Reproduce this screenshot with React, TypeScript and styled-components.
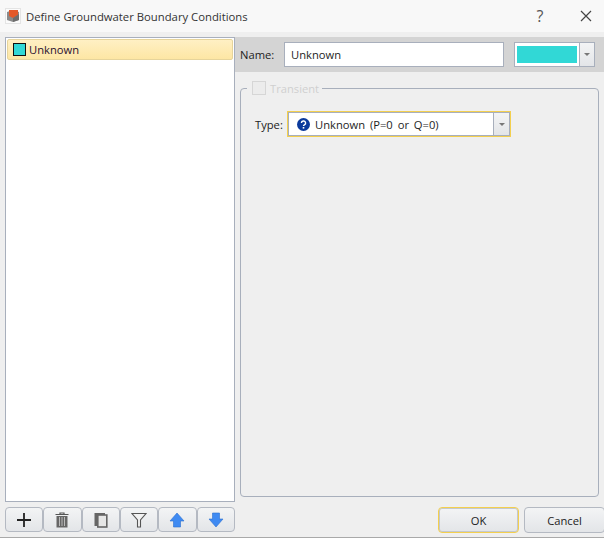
import React from 'react'
import styled, { createGlobalStyle } from 'styled-components'

const GlobalStyle = createGlobalStyle`
  html, body { margin: 0; padding: 0; background: #efefef; }
  * { box-sizing: border-box; }
`

const Dialog = styled.div`
  width: 604px;
  height: 538px;
  display: flex;
  flex-direction: column;
  overflow: hidden;
  background: #efefef;
  font-family: "Open Sans", "Liberation Sans", sans-serif;
  font-size: 11.2px;
  color: #1e1e1e;
  border-bottom: 1px solid #a9a9a9;
`

const TitleBar = styled.div`
  height: 32px;
  flex: none;
  display: flex;
  align-items: center;
  gap: 10px;
  padding-left: 5px;
  background: #f8f8f8;
`

const AppIcon = styled.div`
  width: 16px;
  height: 16px;
  margin-right: -5px;
  border: 1px solid #e4e4e4;
  background: #fbfbfb;
  display: flex;
  align-items: center;
  justify-content: center;
`

const Title = styled.span`
  flex: 1;
  font-size: 11.3px;
  color: #333;
`

const WindowButton = styled.div`
  width: 36px;
  height: 32px;
  display: flex;
  align-items: center;
  justify-content: center;
  color: #555;
  font-size: 16px;
`

const Body = styled.div`
  flex: 1;
  min-height: 0;
  display: grid;
  grid-template-columns: 235px 1fr;
`

const LeftColumn = styled.div`
  display: flex;
  flex-direction: column;
  padding: 5px 0 5px 5px;
`

const List = styled.div`
  flex: 1;
  background: #fff;
  border: 1px solid #a8afbc;
  padding: 1px;
`

const ListItem = styled.div`
  height: 21px;
  display: flex;
  align-items: center;
  gap: 3px;
  padding-left: 5px;
  border: 1px solid #e6d49b;
  border-radius: 2px;
  background: linear-gradient(#fff0c4, #fde6a4);
  color: #2a1030;
`

const Swatch = styled.span`
  width: 13px;
  height: 13px;
  background: #31d8d6;
  border: 1px solid #111;
`

const Toolbar = styled.div`
  flex: none;
  display: flex;
  margin-top: 5px;
  height: 25px;
`

const ToolButton = styled.div`
  width: 38.4px;
  display: flex;
  align-items: center;
  justify-content: center;
  border: 1px solid #b4b9c2;
  border-radius: 4px;
  background: linear-gradient(#f3f4f5, #e3e5e8);
`

const RightColumn = styled.div`
  display: flex;
  flex-direction: column;
  padding-top: 5px;
  min-width: 0;
`

const NameBar = styled.div`
  height: 35px;
  flex: none;
  display: flex;
  align-items: center;
  padding-left: 5px;
  background: #d4d4d4;
`

const Label = styled.span<{ $width: number }>`
  width: ${({ $width }) => $width}px;
  flex: none;
  color: #222;
`

const NameInput = styled.div`
  width: 220px;
  height: 25px;
  margin-left: 10px;
  padding: 0 0 1px 6px;
  display: flex;
  align-items: center;
  background: #fff;
  border: 1px solid #a8afbc;
`

const ColorCombo = styled.div`
  width: 81px;
  height: 25px;
  margin-left: 10px;
  display: flex;
  background: #fff;
  border: 1px solid #a8afbc;
`

const ColorFill = styled.div`
  flex: 1;
  margin: 3px 2px;
  background: #31d8d6;
`

const ArrowBox = styled.div<{ $width: number }>`
  width: ${({ $width }) => $width}px;
  flex: none;
  display: flex;
  align-items: center;
  justify-content: center;
  border-left: 1px solid #a8afbc;
  background: linear-gradient(#f3f4f5, #e3e5e8);
  &::after {
    content: "";
    border-left: 3.5px solid transparent;
    border-right: 3.5px solid transparent;
    border-top: 3px solid #777;
  }
`

const Group = styled.fieldset`
  flex: 1;
  min-height: 0;
  min-width: 0;
  margin: 9px 5px 10px 5px;
  padding: 0 0 0 14px;
  border: 1px solid #a8afbc;
  border-radius: 4px;
`

const GroupLegend = styled.legend`
  display: flex;
  align-items: center;
  gap: 4px;
  height: 14px;
  margin-left: -8px;
  padding: 0 3px 0 5px;
  color: #cfcfcf;
`

const CheckBox = styled.span`
  width: 14px;
  height: 14px;
  border: 1px solid #d6d6d6;
  background: #ececec;
`

const TypeRow = styled.div`
  display: flex;
  align-items: center;
  margin-top: 16px;
  gap: 4px;
`

const TypeCombo = styled.div`
  width: 224px;
  height: 26px;
  display: flex;
  padding: 1px;
  background: #fff;
  border: 1px solid #f3cf4e;
  box-shadow: inset 0 0 0 1px #a8afbc;
`

const TypeValue = styled.div`
  flex: 1;
  display: flex;
  align-items: center;
  gap: 5px;
  padding-left: 8px;
  word-spacing: 2px;
`

const Footer = styled.div`
  flex: none;
  height: 30px;
  display: flex;
  gap: 5px;
  padding-left: 203px;
  padding-bottom: 4px;
`

const DialogButton = styled.div<{ $primary?: boolean }>`
  flex: none;
  width: 81px;
  display: flex;
  align-items: center;
  justify-content: center;
  border: 1px solid ${({ $primary }) => ($primary ? '#f3cf4e' : '#b4b9c2')};
  border-radius: 4px;
  background: linear-gradient(#f3f4f5, #e3e5e8);
  box-shadow: ${({ $primary }) => ($primary ? 'inset 0 0 0 1px #c4c8cf' : 'none')};
  color: #1c1c1c;
`

const ColumnIcon = () => (
  <svg width="14" height="14" viewBox="0 0 14 14">
    <path d="M7 1 L13 3 V11 L7 13 L1 11 V3 Z" fill="#8b8b8b" />
    <path d="M3 1 H12 V6 L7 9 L3 7 Z" fill="#e2592a" />
    <path d="M7 9 V13 L13 11 V5 Z" fill="#6d6d6d" />
  </svg>
)

const PlusIcon = () => (
  <svg width="16" height="16" viewBox="0 0 16 16">
    <path d="M1 8 H15 M8 1 V15" stroke="#222" strokeWidth="1.8" />
  </svg>
)

const TrashIcon = () => (
  <svg width="14" height="16" viewBox="0 0 14 16">
    <path d="M0.5 2.5 H13.5 M5 2.5 V1 H9 V2.5" stroke="#555" strokeWidth="1.2" fill="none" />
    <path d="M1.5 4 H12.5 V15.5 H1.5 Z" fill="#666" />
    <path d="M4.5 5 V14 M7 5 V14 M9.5 5 V14" stroke="#c4c4c4" strokeWidth="0.9" />
  </svg>
)

const CopyIcon = () => (
  <svg width="14" height="16" viewBox="0 0 14 16">
    <path d="M0.5 1 H11 V3 H3 V14 H0.5 Z" fill="#666" />
    <rect x="3.8" y="3" width="9" height="12" fill="#e6e6e6" stroke="#666" strokeWidth="1.6" />
  </svg>
)

const FunnelIcon = () => (
  <svg width="16" height="16" viewBox="0 0 16 16">
    <path d="M1 1.5 H15 L9.5 8 V15 H6.5 V8 Z" fill="#f2f2f2" stroke="#555" strokeWidth="1.1" />
  </svg>
)

const ArrowIcon = ({ down }: { down?: boolean }) => (
  <svg width="16" height="16" viewBox="0 0 16 16">
    <path
      d={down ? 'M4.5 1 H11.5 V7 H15 L8 15 L1 7 H4.5 Z' : 'M8 1 L15 9 H11.5 V15 H4.5 V9 H1 Z'}
      fill="#3f8af2"
      stroke="#2a6fd0"
      strokeWidth="0.6"
    />
  </svg>
)

const HelpIcon = () => (
  <svg width="13" height="13" viewBox="0 0 13 13">
    <circle cx="6.5" cy="6.5" r="6.5" fill="#0b3a9c" />
    <path d="M4.4 5 A2.1 2 0 1 1 7.4 6.8 Q6.5 7.2 6.5 8" stroke="#fff" strokeWidth="1.4" fill="none" />
    <rect x="5.7" y="9" width="1.6" height="1.6" fill="#fff" />
  </svg>
)

const CloseIcon = () => (
  <svg width="12" height="12" viewBox="0 0 12 12">
    <path d="M1 1 L11 11 M11 1 L1 11" stroke="#444" strokeWidth="1.2" />
  </svg>
)

const App = () => {
  return (
    <Dialog>
      <GlobalStyle />
      <TitleBar>
        <AppIcon><ColumnIcon /></AppIcon>
        <Title>Define Groundwater Boundary Conditions</Title>
        <WindowButton>?</WindowButton>
        <WindowButton><CloseIcon /></WindowButton>
      </TitleBar>
      <Body>
        <LeftColumn>
          <List>
            <ListItem><Swatch />Unknown</ListItem>
          </List>
          <Toolbar>
            <ToolButton><PlusIcon /></ToolButton>
            <ToolButton><TrashIcon /></ToolButton>
            <ToolButton><CopyIcon /></ToolButton>
            <ToolButton><FunnelIcon /></ToolButton>
            <ToolButton><ArrowIcon /></ToolButton>
            <ToolButton><ArrowIcon down /></ToolButton>
          </Toolbar>
        </LeftColumn>
        <RightColumn>
          <NameBar>
            <Label $width={34}>Name:</Label>
            <NameInput>Unknown</NameInput>
            <ColorCombo>
              <ColorFill />
              <ArrowBox $width={15} />
            </ColorCombo>
          </NameBar>
          <Group>
            <GroupLegend><CheckBox />Transient</GroupLegend>
            <TypeRow>
              <Label $width={28}>Type:</Label>
              <TypeCombo>
                <TypeValue><HelpIcon />Unknown (P=0 or Q=0)</TypeValue>
                <ArrowBox $width={16} />
              </TypeCombo>
            </TypeRow>
          </Group>
          <Footer>
            <DialogButton $primary>OK</DialogButton>
            <DialogButton>Cancel</DialogButton>
          </Footer>
        </RightColumn>
      </Body>
    </Dialog>
  )
}

export default App
